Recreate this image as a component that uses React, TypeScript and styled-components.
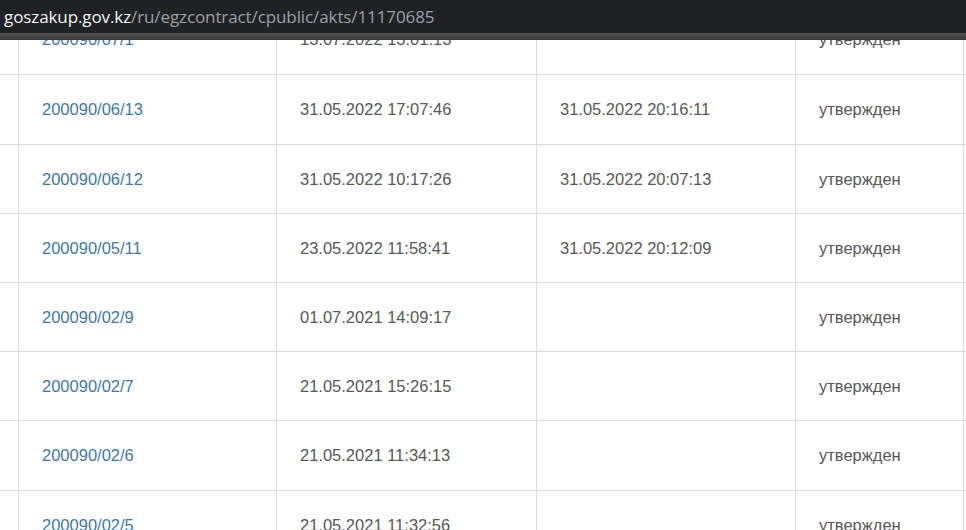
import React from 'react';
import styled, { createGlobalStyle } from 'styled-components';

const GlobalStyle = createGlobalStyle`
  html, body {
    margin: 0;
    padding: 0;
    background: #fff;
    overflow: hidden;
  }
`;

const Page = styled.div`
  width: 966px;
  height: 530px;
  display: flex;
  flex-direction: column;
  overflow: hidden;
`;

const AddressBar = styled.div`
  flex: 0 0 33px;
  display: flex;
  align-items: center;
  padding-left: 4px;
  background: #202124;
  font-family: 'Open Sans', 'Noto Sans', sans-serif;
  font-size: 17px;
  letter-spacing: -0.1px;
  color: #9aa0a6;
  white-space: nowrap;
`;

const Host = styled.span`
  color: #f1f3f4;
`;

const BarShadow = styled.div`
  flex: 0 0 7px;
  background: linear-gradient(#505050, #3a3a3a);
`;

const Viewport = styled.div`
  flex: 1;
  overflow: hidden;
`;

// the table is scrolled: its first row sits partly under the address bar
const Table = styled.div`
  margin-top: -35px;
  margin-left: -40px;
  display: grid;
  grid-template-columns: 59px 258px 260px 259px 168px 10px;
  font-family: 'Liberation Sans', Arial, sans-serif;
  font-size: 16.5px;
  color: #585858;
`;

const Cell = styled.div<{ $h: number }>`
  height: ${(p) => p.$h}px;
  box-sizing: border-box;
  display: flex;
  align-items: center;
  padding-left: 23px;
  border-right: 1px solid #ddd;
  border-bottom: 1px solid #ddd;
  white-space: nowrap;
`;

const Filler = styled.div<{ $h: number }>`
  height: ${(p) => p.$h}px;
  box-sizing: border-box;
  border-bottom: 1px solid #ddd;
`;

const ActLink = styled.a`
  color: #3d79ab;
  text-decoration: none;
`;

interface Act {
  num: string;
  created: string;
  signed: string;
  status: string;
}

const acts: Act[] = [
  { num: '200090/07/1', created: '13.07.2022 13:01:13', signed: '', status: 'утвержден' },
  { num: '200090/06/13', created: '31.05.2022 17:07:46', signed: '31.05.2022 20:16:11', status: 'утвержден' },
  { num: '200090/06/12', created: '31.05.2022 10:17:26', signed: '31.05.2022 20:07:13', status: 'утвержден' },
  { num: '200090/05/11', created: '23.05.2022 11:58:41', signed: '31.05.2022 20:12:09', status: 'утвержден' },
  { num: '200090/02/9', created: '01.07.2021 14:09:17', signed: '', status: 'утвержден' },
  { num: '200090/02/7', created: '21.05.2021 15:26:15', signed: '', status: 'утвержден' },
  { num: '200090/02/6', created: '21.05.2021 11:34:13', signed: '', status: 'утвержден' },
  { num: '200090/02/5', created: '21.05.2021 11:32:56', signed: '', status: 'утвержден' },
];

const rowHeights = [70, 70, 69, 69, 69, 69, 70, 70];

export default function App() {
  return (
    <Page>
      <GlobalStyle />
      <AddressBar>
        <Host>goszakup.gov.kz</Host>/ru/egzcontract/cpublic/akts/11170685
      </AddressBar>
      <BarShadow />
      <Viewport>
        <Table>
          {acts.map((a, i) => {
            const h = rowHeights[i];
            return (
              <React.Fragment key={a.num}>
                <Cell $h={h} />
                <Cell $h={h}>
                  <ActLink href="#">{a.num}</ActLink>
                </Cell>
                <Cell $h={h}>{a.created}</Cell>
                <Cell $h={h}>{a.signed}</Cell>
                <Cell $h={h}>{a.status}</Cell>
                <Filler $h={h} />
              </React.Fragment>
            );
          })}
        </Table>
      </Viewport>
    </Page>
  );
}
